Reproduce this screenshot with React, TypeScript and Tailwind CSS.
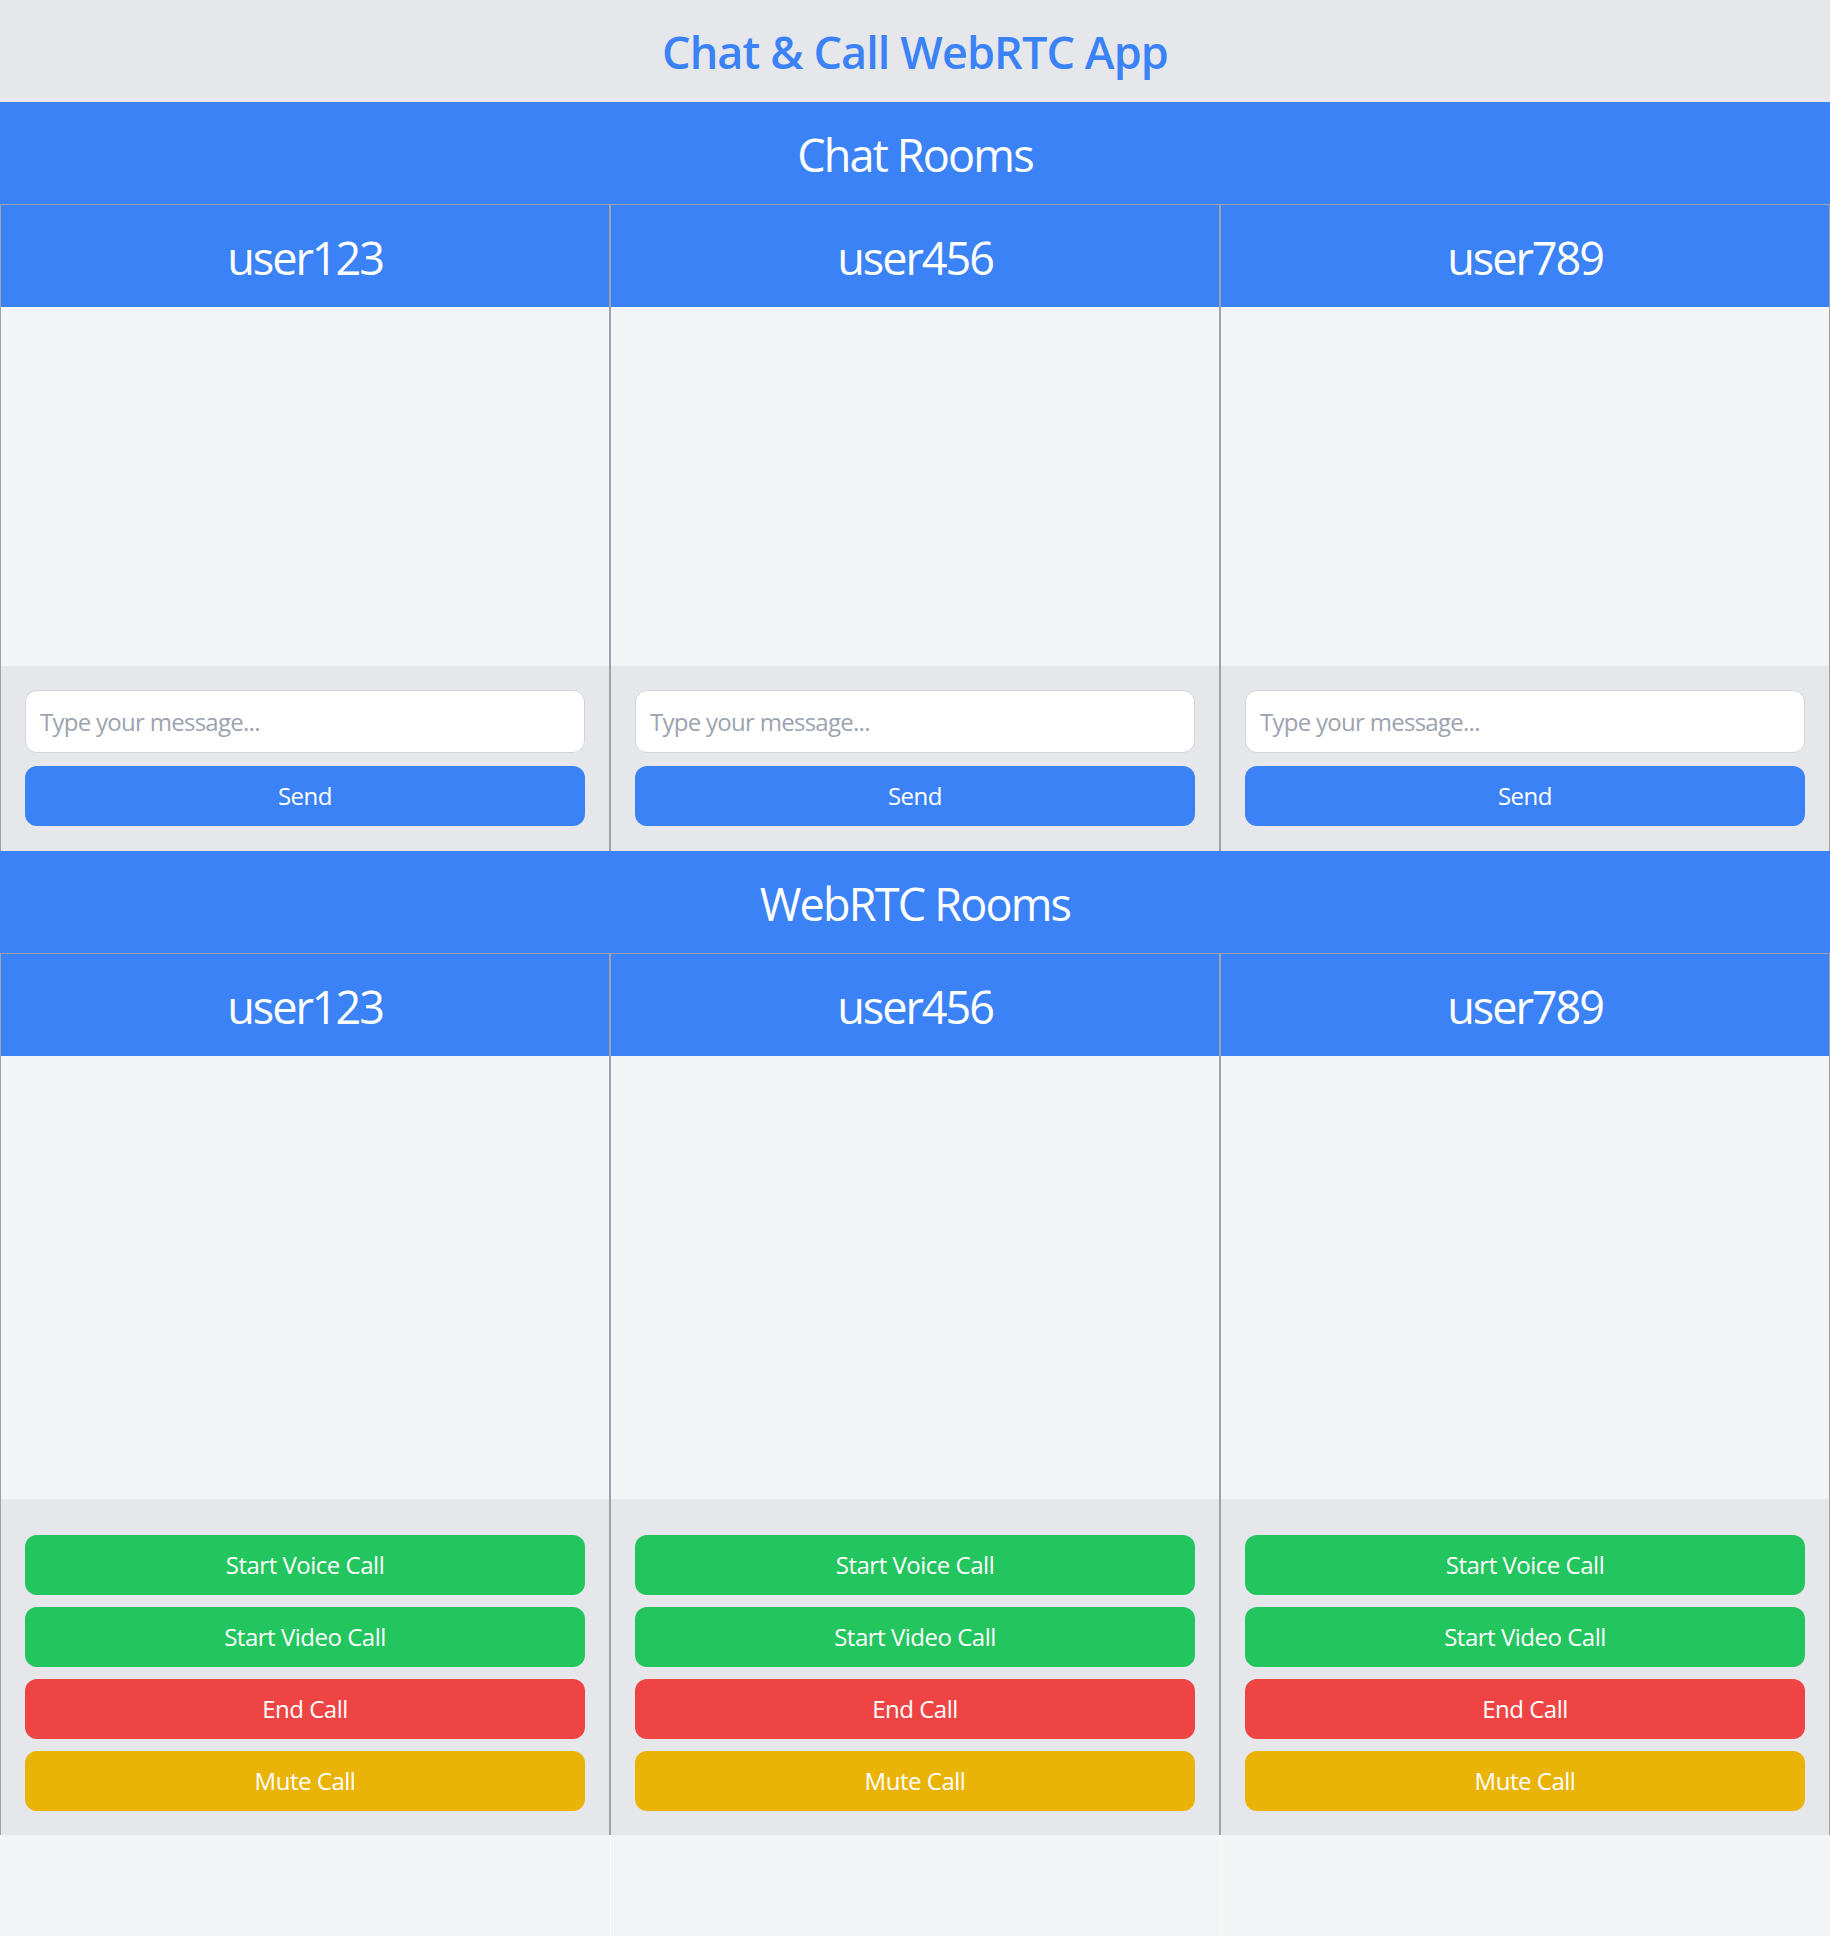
import React from "react";

const users = ["user123", "user456", "user789"];
const font = { fontFamily: '"Open Sans", "Noto Sans", sans-serif' };

function ChatColumn({ name }: { name: string }) {
  return (
    <div className="flex flex-col border-x border-t border-[#9ca3af]">
      <div className="bg-[#3b82f6] pb-[22px] pt-[26px] text-center text-[45px] leading-[54px] tracking-[-0.045em] text-white">{name}</div>
      <div className="h-[359px] bg-[#f3f4f6]"></div>
      <div className="flex flex-col bg-[#e5e7eb] px-[24px] pb-[25px] pt-[24px]">
        <input
          className="h-[63px] w-full rounded-[12px] border-[1.5px] border-[#d1d5db] bg-white px-[14px] text-[24px] tracking-[-0.03em] text-[#374151] outline-none placeholder:text-[#9ca3af]"
          placeholder="Type your message..."
        />
        <button className="mt-[13px] h-[60px] w-full rounded-[12px] bg-[#3b82f6] text-[24px] tracking-[-0.02em] text-white">Send</button>
      </div>
    </div>
  );
}

function CallColumn({ name }: { name: string }) {
  const btn = "mt-[12px] h-[60px] w-full rounded-[12px] text-[24px] tracking-[-0.02em] text-white";
  return (
    <div className="flex flex-col border-x border-t border-[#9ca3af]">
      <div className="bg-[#3b82f6] pb-[22px] pt-[26px] text-center text-[45px] leading-[54px] tracking-[-0.045em] text-white">{name}</div>
      <div className="h-[443px] bg-[#f3f4f6]"></div>
      <div className="flex flex-col bg-[#e5e7eb] px-[24px] pb-[24px] pt-[24px]">
        <button className={`${btn} bg-[#22c55e]`}>Start Voice Call</button>
        <button className={`${btn} bg-[#22c55e]`}>Start Video Call</button>
        <button className={`${btn} bg-[#ef4444]`}>End Call</button>
        <button className={`${btn} bg-[#eab308]`}>Mute Call</button>
      </div>
    </div>
  );
}

export default function App() {
  return (
    <div className="flex min-h-screen flex-col bg-[#f3f4f6]" style={font}>
      <header className="bg-[#e5e7eb] pb-[23px] pt-[25px] text-center">
        <h1 className="text-[45px] font-semibold leading-[54px] tracking-[-0.02em] text-[#3b82f6]">Chat &amp; Call WebRTC App</h1>
      </header>
      <section>
        <h2 className="bg-[#3b82f6] pb-[22px] pt-[26px] text-center text-[45px] leading-[54px] tracking-[-0.04em] text-white">Chat Rooms</h2>
        <div className="grid grid-cols-3">
          {users.map((u) => (
            <ChatColumn key={u} name={u} />
          ))}
        </div>
      </section>
      <section>
        <h2 className="bg-[#3b82f6] pb-[22px] pt-[26px] text-center text-[45px] leading-[54px] tracking-[-0.04em] text-white">WebRTC Rooms</h2>
        <div className="grid grid-cols-3">
          {users.map((u) => (
            <CallColumn key={u} name={u} />
          ))}
        </div>
      </section>
      <div className="grid flex-1 grid-cols-3">
        <div></div>
        <div className="border-l border-white"></div>
        <div className="border-l border-white"></div>
      </div>
    </div>
  );
}
